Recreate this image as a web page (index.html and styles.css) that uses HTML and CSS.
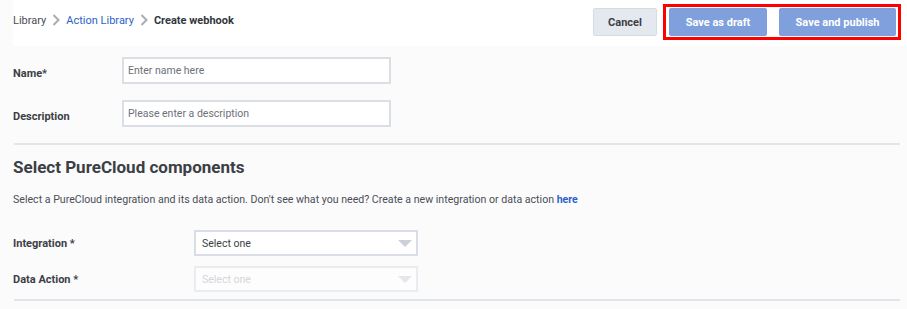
FILE: index.html
```html
<!DOCTYPE html>
<html lang="en">

<head>
    <meta charset="UTF-8" />
    <meta name="viewport" content="width=device-width, initial-scale=1.0" />
    <title>Create webhook</title>
    <link rel="stylesheet" href="styles.css">
</head>

<body>

    <div class="topbar">
        <div class="crumbs">
            <span>Library</span>
            <svg class="chev" viewBox="0 0 8 12" width="8" height="12"><path d="M1.5 1 L6.5 6 L1.5 11" fill="none" stroke="#a9adb3" stroke-width="2" /></svg>
            <a href="#">Action Library</a>
            <svg class="chev" viewBox="0 0 8 12" width="8" height="12"><path d="M1.5 1 L6.5 6 L1.5 11" fill="none" stroke="#a9adb3" stroke-width="2" /></svg>
            <strong>Create webhook</strong>
        </div>
        <div class="actions">
            <button class="btn btn-cancel">Cancel</button>
            <div class="highlight">
                <button class="btn btn-primary">Save as draft</button>
                <button class="btn btn-primary btn-wide">Save and publish</button>
            </div>
        </div>
    </div>

    <div class="content">
        <div class="form-grid">
            <label>Name*</label>
            <input type="text" placeholder="Enter name here" />
            <label>Description</label>
            <input type="text" placeholder="Please enter a description" />
        </div>

        <hr class="divider" />

        <h2>Select PureCloud components</h2>
        <p class="hint">Select a PureCloud integration and its data action. Don't see what you need? Create a new integration or data action <a href="#">here</a></p>

        <div class="select-grid">
            <label>Integration *</label>
            <div class="select">Select one<span class="caret"></span></div>
            <label>Data Action *</label>
            <div class="select disabled">Select one<span class="caret"></span></div>
        </div>

        <hr class="divider" />
    </div>

</body>

</html>
```

FILE: styles.css
```css
* {
    box-sizing: border-box;
    font-family: Roboto, 'Liberation Sans', sans-serif;
}

body {
    margin: 0;
    background: #fbfbfc;
    color: #3b3f45;
}

.topbar {
    margin-left: 13px;
    height: 46px;
    padding-right: 6px;
    background: white;
    display: flex;
    align-items: center;
    justify-content: space-between;
    padding-bottom: 2px;
}

.crumbs {
    display: flex;
    align-items: center;
    gap: 7px;
    font-size: 11px;
    color: #4a4e55;
    margin-top: -4px;
}

.crumbs a {
    color: #2b63c9;
    text-decoration: none;
}

.crumbs strong {
    color: #33373d;
}

.chev {
    margin: 0 -1px;
}

.actions {
    display: flex;
    align-items: center;
    gap: 6px;
}

.highlight {
    display: flex;
    gap: 12px;
    border: 3px solid #ff0000;
    padding: 1px 2px 1px 3px;
}

.btn {
    height: 28px;
    border: none;
    border-radius: 2px;
    font-size: 11px;
    font-weight: bold;
    cursor: pointer;
}

.btn-cancel {
    width: 64px;
    background: #e4e9f0;
    border: 1px solid #d6dce4;
    color: #3b3f45;
}

.btn-primary {
    width: 98px;
    background: #7fa0dc;
    color: white;
}

.btn-wide {
    width: 117px;
}

.content {
    padding: 0 7px 0 13px;
}

.form-grid {
    display: grid;
    grid-template-columns: 109px 269px;
    row-gap: 16px;
    align-items: center;
    margin-top: 11px;
}

label {
    font-size: 11px;
    font-weight: bold;
    color: #3b3f45;
    padding-top: 6px;
}

input {
    height: 27px;
    border: 2px solid #dadfe6;
    border-radius: 0;
    padding: 0 4px;
    font-size: 10.5px;
    background: white;
}

input::placeholder {
    color: #6d7179;
}

.divider {
    border: none;
    height: 2px;
    background: #e1e5ec;
    margin: 16px 0 0 1px;
}

h2 {
    font-size: 17px;
    margin: 12px 0 0;
    color: #3b3f45;
}

.hint {
    font-size: 10.6px;
    color: #4a4e55;
    margin: 16px 0 0;
}

.hint a {
    color: #2b63c9;
    font-weight: bold;
    text-decoration: none;
}

.select-grid {
    display: grid;
    grid-template-columns: 181px 224px;
    row-gap: 10px;
    align-items: center;
    margin-top: 24px;
}

.select-grid label {
    padding-top: 0;
}

.select {
    position: relative;
    height: 26px;
    border: 2px solid #d9dde5;
    background: white;
    font-size: 10.5px;
    color: #3b3f45;
    padding: 0 6px;
    display: flex;
    align-items: center;
}

.select.disabled {
    border-color: #e9ecf1;
    color: #d3d6db;
    background: #fdfdfd;
}

.caret {
    position: absolute;
    right: 4px;
    top: 8px;
    border-left: 7px solid transparent;
    border-right: 7px solid transparent;
    border-top: 7px solid #ccd1d9;
}

.select.disabled .caret {
    border-top-color: #e3e6eb;
}

.select-grid + .divider {
    margin-top: 7px;
}
```
